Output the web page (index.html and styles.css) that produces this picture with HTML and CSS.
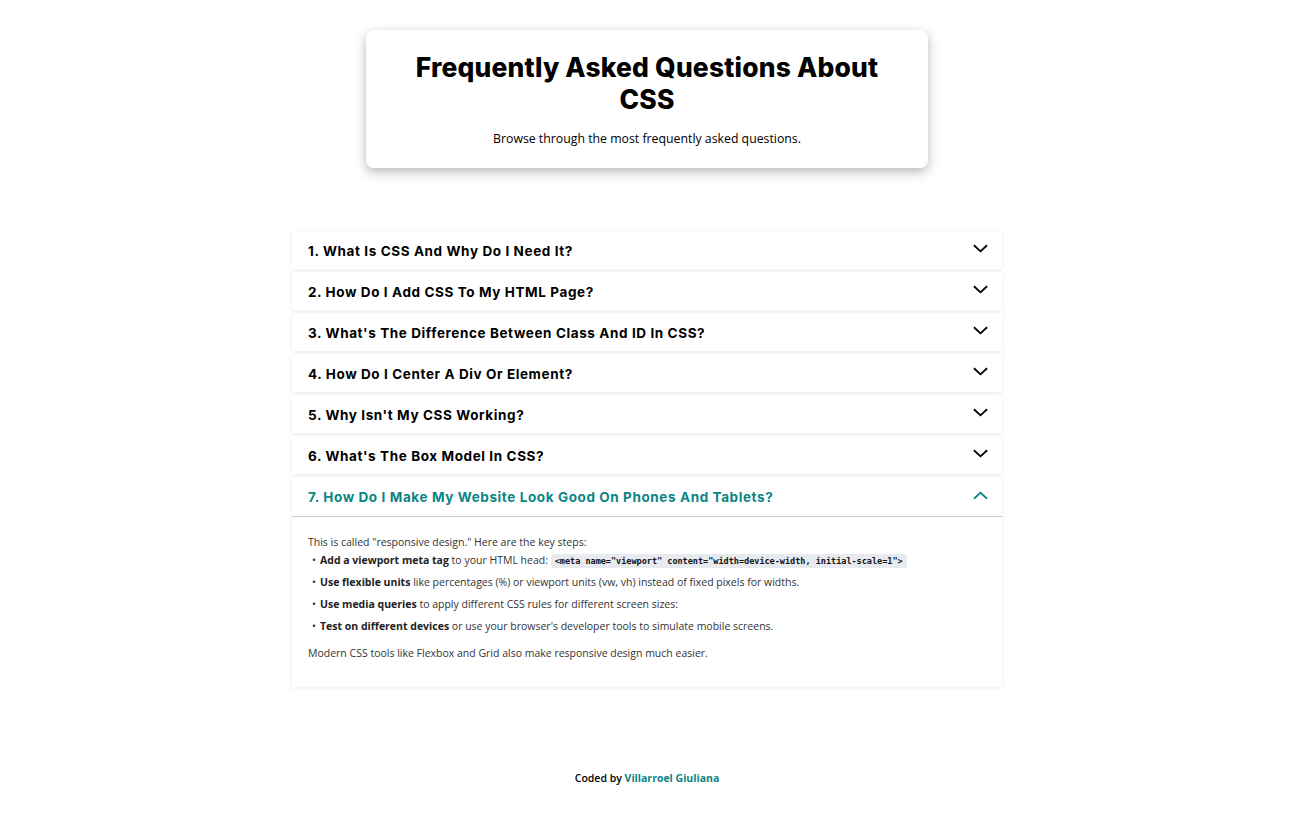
FILE: index.html
```html
<!DOCTYPE html>
<html lang="en">
<head>
<meta charset="utf-8">
<title>FAQ CSS</title>
<link rel="stylesheet" href="styles.css">
</head>
<body>
<main class="page">
  <header class="hero">
    <h1 class="hero-title">Frequently Asked Questions About CSS</h1>
    <p class="hero-sub">Browse through the most frequently asked questions.</p>
  </header>

  <section class="faq">
    <div class="item">
      <div class="q"><span>1. What Is CSS And Why Do I Need It?</span><svg class="chev" viewBox="0 0 16 9"><path d="M1 1l7 6.5L15 1"/></svg></div>
    </div>
    <div class="item">
      <div class="q"><span>2. How Do I Add CSS To My HTML Page?</span><svg class="chev" viewBox="0 0 16 9"><path d="M1 1l7 6.5L15 1"/></svg></div>
    </div>
    <div class="item">
      <div class="q"><span>3. What's The Difference Between Class And ID In CSS?</span><svg class="chev" viewBox="0 0 16 9"><path d="M1 1l7 6.5L15 1"/></svg></div>
    </div>
    <div class="item">
      <div class="q"><span>4. How Do I Center A Div Or Element?</span><svg class="chev" viewBox="0 0 16 9"><path d="M1 1l7 6.5L15 1"/></svg></div>
    </div>
    <div class="item">
      <div class="q"><span>5. Why Isn't My CSS Working?</span><svg class="chev" viewBox="0 0 16 9"><path d="M1 1l7 6.5L15 1"/></svg></div>
    </div>
    <div class="item">
      <div class="q"><span>6. What's The Box Model In CSS?</span><svg class="chev" viewBox="0 0 16 9"><path d="M1 1l7 6.5L15 1"/></svg></div>
    </div>
    <div class="item open">
      <div class="q"><span>7. How Do I Make My Website Look Good On Phones And Tablets?</span><svg class="chev" viewBox="0 0 16 9"><path d="M1 8l7-6.5L15 8"/></svg></div>
      <div class="answer">
        <p class="a-intro">This is called "responsive design." Here are the key steps:</p>
        <ul class="a-list">
          <li><strong>Add a viewport meta tag</strong> to your HTML head: <code>&lt;meta name="viewport" content="width=device-width, initial-scale=1"&gt;</code></li>
          <li><strong>Use flexible units</strong> like percentages (%) or viewport units (vw, vh) instead of fixed pixels for widths.</li>
          <li><strong>Use media queries</strong> to apply different CSS rules for different screen sizes:</li>
          <li><strong>Test on different devices</strong> or use your browser's developer tools to simulate mobile screens.</li>
        </ul>
        <p class="a-outro">Modern CSS tools like Flexbox and Grid also make responsive design much easier.</p>
      </div>
    </div>
  </section>

  <footer class="credit">Coded by <span class="author">Villarroel Giuliana</span></footer>
</main>
</body>
</html>
```
FILE: styles.css
```css
* { box-sizing: border-box; }
html, body { margin: 0; padding: 0; background: #fff; }
body {
  font-family: "Open Sans", "Noto Sans", sans-serif;
  color: #000;
}
.page {
  display: flex;
  flex-direction: column;
  align-items: center;
  padding-top: 30px;
  padding-right: 22px;
}
.hero {
  width: 562px;
  background: #fff;
  border-radius: 8px;
  box-shadow: 0 4px 12px rgba(0,0,0,0.28);
  padding: 21px 40px 20px;
  text-align: center;
}
.hero-title {
  margin: 0;
  font-family: "Inter", sans-serif;
  font-weight: 800;
  font-size: 26.4px;
  line-height: 32px;
  letter-spacing: 0.2px;
}
.hero-sub {
  margin: 15px 0 0;
  font-size: 12.3px;
  line-height: 18px;
}
.faq {
  width: 710px;
  margin-top: 63px;
  display: flex;
  flex-direction: column;
  gap: 3px;
}
.item {
  background: #fff;
  box-shadow: 0 1px 5px rgba(0,0,0,0.08);
}
.q {
  height: 38px;
  padding: 2px 14px 0 16px;
  display: flex;
  align-items: center;
  justify-content: space-between;
  font-family: "Inter", sans-serif;
  font-weight: 700;
  font-size: 13.5px;
  letter-spacing: 0.6px;
  color: #000;
}
.chev {
  width: 15px;
  height: 9px;
  margin-top: -5px;
  fill: none;
  stroke: currentColor;
  stroke-width: 2;
}
.open .q {
  color: #0b8484;
  border-bottom: 1px solid #c9c9c9;
  height: 40px;
  padding-top: 1px;
}
.open .chev { margin-top: -3px; }
.answer {
  padding: 17px 16px 26px;
  font-size: 10.5px;
  line-height: 16px;
  color: #333;
}
.answer p { margin: 0; }
.a-list {
  margin: 2px 0 11px;
  padding-left: 12px;
  list-style: none;
}
.a-list li {
  margin-bottom: 6px;
  position: relative;
}
.a-list li:first-child { margin-bottom: 5px; }
.a-list li::before {
  content: "•";
  position: absolute;
  left: -8px;
}
.a-list strong { font-weight: 700; color: #222; }
code {
  font-family: "DejaVu Sans Mono", monospace;
  font-size: 8.5px;
  font-weight: 700;
  background: #e7eaee;
  padding: 2px 4px;
  border-radius: 3px;
  color: #111;
}
.credit {
  margin-top: 84px;
  font-size: 10.5px;
  font-weight: 600;
}
.author {
  color: #0b8484;
  font-weight: 700;
}
```
